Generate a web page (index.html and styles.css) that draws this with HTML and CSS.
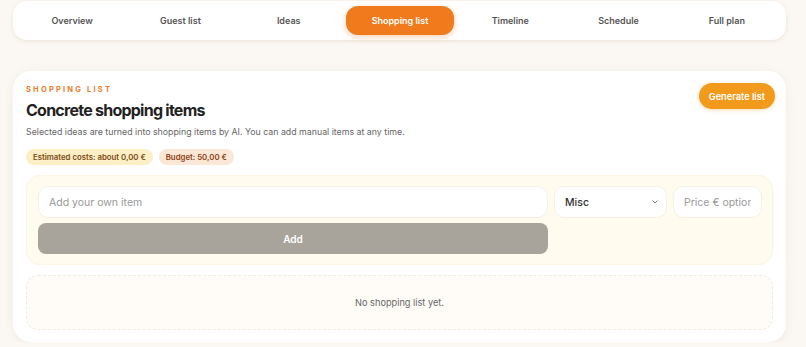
FILE: index.html
```html
<!DOCTYPE html>
<html lang="en">
<head>
  <meta charset="UTF-8" />
  <meta name="viewport" content="width=device-width, initial-scale=1.0"/>
  <title>Shopping list</title>
  <link rel="stylesheet" href="styles.css">
</head>
<body>

  <nav class="tabs">
    <button class="tab">Overview</button>
    <button class="tab">Guest list</button>
    <button class="tab">Ideas</button>
    <button class="tab active">Shopping list</button>
    <button class="tab">Timeline</button>
    <button class="tab">Schedule</button>
    <button class="tab">Full plan</button>
  </nav>

  <section class="card">
    <div class="card-head">
      <div class="head-text">
        <div class="eyebrow">Shopping list</div>
        <h2>Concrete shopping items</h2>
        <p class="lead">Selected ideas are turned into shopping items by AI. You can add manual items at any time.</p>
        <div class="badges">
          <span class="badge badge-cost">Estimated costs: about 0,00 €</span>
          <span class="badge badge-budget">Budget: 50,00 €</span>
        </div>
      </div>
      <button class="btn-generate">Generate list</button>
    </div>

    <form class="add-form" onsubmit="return false">
      <input class="field" type="text" placeholder="Add your own item">
      <select class="field select">
        <option>Misc</option>
      </select>
      <input class="field" type="text" placeholder="Price € optional">
      <button class="btn-add" type="submit">Add</button>
    </form>

    <div class="empty">No shopping list yet.</div>
  </section>

</body>
</html>
```

FILE: styles.css
```css
:root {
  --bg: #fbf7f2;
  --white: #ffffff;
  --orange: #f07a1c;
  --amber: #f29a1c;
  --text: #222;
  --muted: #666;
}

* {
  box-sizing: border-box;
}

body {
  font-family: Inter, "Noto Sans", sans-serif;
  background-color: var(--bg);
  color: var(--text);
  margin: 0;
  padding: 1px 20px 0 13px;
}

.tabs {
  display: flex;
  background: var(--white);
  border-radius: 14px;
  padding: 5px;
  height: 39px;
  box-shadow: 0 1px 4px rgba(120, 90, 50, 0.12);
}

.tab {
  flex: 1;
  border: none;
  background: transparent;
  font-family: inherit;
  font-size: 9px;
  font-weight: 600;
  color: #555;
  border-radius: 12px;
  cursor: pointer;
}

.tab.active {
  background: var(--orange);
  color: var(--white);
  margin: 0 2px 0 3px;
  box-shadow: 0 2px 6px rgba(240, 122, 28, 0.35);
}

.card {
  margin-top: 31px;
  background: var(--white);
  border-radius: 18px;
  padding: 12px 13px 14px;
  height: 271px;
  box-shadow: 0 2px 10px rgba(120, 90, 50, 0.08);
}

.card-head {
  display: flex;
  justify-content: space-between;
  align-items: flex-start;
}

.eyebrow {
  margin-top: 1px;
  font-size: 7.5px;
  font-weight: 700;
  letter-spacing: 2.2px;
  text-transform: uppercase;
  color: #ea7d2c;
  line-height: 12px;
}

h2 {
  margin: 3px 0 0;
  font-size: 16px;
  font-weight: 700;
  letter-spacing: -0.75px;
  line-height: 22px;
  color: var(--text);
}

.lead {
  margin: 4px 0 0;
  font-size: 8.8px;
  line-height: 14px;
  color: var(--muted);
}

.badges {
  display: flex;
  gap: 6px;
  margin-top: 10px;
}

.badge {
  font-size: 7.8px;
  font-weight: 600;
  line-height: 16px;
  padding: 0 7px;
  border-radius: 8px;
}

.badge-cost {
  background: #fcefc6;
  color: #7a4a12;
}

.badge-budget {
  background: #fbe7d5;
  color: #8a3f14;
}

.btn-generate {
  border: none;
  background: var(--amber);
  color: var(--white);
  font-family: inherit;
  font-size: 9.2px;
  font-weight: 600;
  height: 26px;
  padding: 0 10px;
  border-radius: 13px;
  margin-right: -2px;
  box-shadow: 0 1px 4px rgba(242, 154, 28, 0.35);
  cursor: pointer;
}

.add-form {
  display: grid;
  grid-template-columns: 1fr 113px 89px;
  gap: 5px 6px;
  margin-top: 10px;
  padding: 10px 10px 10px 11px;
  background: #fffbef;
  border: 1px solid #fcf4e2;
  border-radius: 14px;
}

.field {
  height: 32px;
  border: 1px solid #f7f0e4;
  border-radius: 10px;
  background: var(--white);
  font-family: inherit;
  font-size: 10.5px;
  color: #333;
  padding: 0 10px;
  outline: none;
  min-width: 0;
}

.field::placeholder {
  color: #999;
}

.select {
  appearance: none;
  font-weight: 500;
  background-image: url("data:image/svg+xml;utf8,<svg xmlns='http://www.w3.org/2000/svg' width='6' height='4' viewBox='0 0 6 4'><path d='M.6.6 3 3 5.4.6' fill='none' stroke='%23777' stroke-width='1'/></svg>");
  background-repeat: no-repeat;
  background-position: right 8px center;
}

.btn-add {
  grid-column: 1;
  height: 31px;
  border: none;
  border-radius: 8px;
  background: #a8a49c;
  color: var(--white);
  font-family: inherit;
  font-size: 10px;
  font-weight: 600;
  cursor: pointer;
}

.empty {
  margin-top: 10px;
  height: 55px;
  display: flex;
  align-items: center;
  justify-content: center;
  border: 1px dashed #f1ebe2;
  border-radius: 12px;
  background: #fffcf7;
  font-size: 9.2px;
  color: var(--muted);
}
```
